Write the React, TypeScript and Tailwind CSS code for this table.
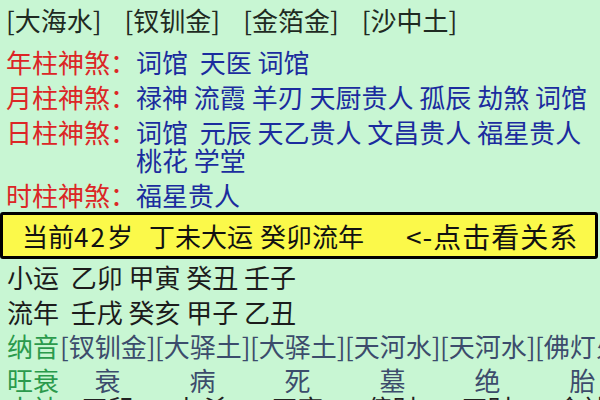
const nayinTop = ["[大海水]", "[钗钏金]", "[金箔金]", "[沙中土]"];

const shensha = [
  { label: "年柱神煞：", value: "词馆  天医 词馆" },
  { label: "月柱神煞：", value: "禄神 流霞 羊刃 天厨贵人 孤辰 劫煞 词馆" },
  { label: "日柱神煞：", value: "词馆  元辰 天乙贵人 文昌贵人 福星贵人 桃花 学堂" },
  { label: "时柱神煞：", value: "福星贵人" },
];

const grid = [
  { label: "纳音", color: "text-[#3c4c6c]", cells: ["[钗钏金]", "[大驿土]", "[大驿土]", "[天河水]", "[天河水]", "[佛灯火]"], rowClass: "leading-[34px]", align: "text-left" },
  { label: "旺衰", color: "text-[#3c4c6c]", cells: ["衰", "病", "死", "墓", "绝", "胎"], rowClass: "mt-[3px] leading-[28px]", align: "text-center" },
  { label: "十神", color: "text-[#222]", cells: ["正印", "七杀", "正官", "偏财", "正财", "食神"], rowClass: "leading-[28px]", align: "text-center" },
];

export default function App() {
  return (
    <div
      className="w-[600px] h-[400px] overflow-hidden bg-[#c8f6d3] text-[26px] leading-[28px]"
      style={{ fontFamily: '"Noto Sans CJK SC", "Noto Sans", sans-serif' }}
    >
      {/* 纳音 top line */}
      <div className="flex gap-[23px] pl-[6px] pt-[6px] text-[#1f2a22] whitespace-nowrap">
        {nayinTop.map((n) => (
          <span key={n}>{n}</span>
        ))}
      </div>

      {/* 神煞 */}
      <div className="mt-[14px] flex flex-col gap-[7px]">
        {shensha.map((row) => (
          <div key={row.label} className="flex pl-[6px]">
            <span className="shrink-0 text-[#dc2626]">{row.label}</span>
            <span className="text-[#1b2c9e] whitespace-pre-wrap pr-[8px]">{row.value}</span>
          </div>
        ))}
      </div>

      {/* current luck bar */}
      <div className="mt-[3px] mr-[2px] h-[47px] flex items-center bg-[#fbf94a] border-[3px] border-black rounded-[3px] text-[26px] text-[#111] whitespace-nowrap">
        <span className="ml-[19px] shrink-0">
          当前<span className="tracking-[2px]">42</span>岁
        </span>
        <span className="ml-[16px] shrink-0">丁未大运</span>
        <span className="ml-[7px] shrink-0">癸卯流年</span>
        <span className="ml-[42px] text-[28px] tracking-[1px]">{"<-"}点击看关系</span>
      </div>

      {/* 小运 / 流年 */}
      <div className="pl-[7px] text-[#1c1c1c] leading-[35px] whitespace-pre">
        <div>小运  乙卯 甲寅 癸丑 壬子</div>
        <div>流年  壬戌 癸亥 甲子 乙丑</div>
      </div>

      {grid.map((row) => (
        <div key={row.label} className={`flex pl-[7px] whitespace-nowrap ${row.rowClass}`}>
          <span className="w-[53px] shrink-0 text-[#2b9a4c]">{row.label}</span>
          {row.cells.map((c, i) => (
            <span key={i} className={`w-[95px] shrink-0 ${row.align} ${row.color}`}>
              {c}
            </span>
          ))}
        </div>
      ))}
    </div>
  );
}
